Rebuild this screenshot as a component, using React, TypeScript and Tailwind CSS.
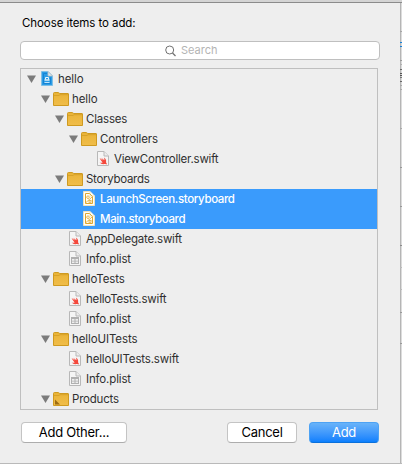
import React from "react";

type Kind = "project" | "folder" | "products" | "swift" | "storyboard" | "plist";

interface Item {
  name: string;
  depth: number;
  kind: Kind;
  selected?: boolean;
  spacing: number;
}

const items: Item[] = [
  { name: "hello", depth: 0, kind: "project", spacing: -0.1 },
  { name: "hello", depth: 1, kind: "folder", spacing: -0.1 },
  { name: "Classes", depth: 2, kind: "folder", spacing: -0.2 },
  { name: "Controllers", depth: 3, kind: "folder", spacing: -0.15 },
  { name: "ViewController.swift", depth: 4, kind: "swift", spacing: -0.21 },
  { name: "Storyboards", depth: 2, kind: "folder", spacing: -0.3 },
  { name: "LaunchScreen.storyboard", depth: 3, kind: "storyboard", selected: true, spacing: -0.36 },
  { name: "Main.storyboard", depth: 3, kind: "storyboard", selected: true, spacing: -0.36 },
  { name: "AppDelegate.swift", depth: 2, kind: "swift", spacing: -0.22 },
  { name: "Info.plist", depth: 2, kind: "plist", spacing: -0.15 },
  { name: "helloTests", depth: 1, kind: "folder", spacing: -0.15 },
  { name: "helloTests.swift", depth: 2, kind: "swift", spacing: -0.18 },
  { name: "Info.plist", depth: 2, kind: "plist", spacing: -0.15 },
  { name: "helloUITests", depth: 1, kind: "folder", spacing: -0.1 },
  { name: "helloUITests.swift", depth: 2, kind: "swift", spacing: -0.16 },
  { name: "Info.plist", depth: 2, kind: "plist", spacing: -0.15 },
  { name: "Products", depth: 1, kind: "products", spacing: -0.2 },
];

function Folder({ products }: { products: boolean }) {
  return (
    <svg width="16" height="16" viewBox="0 0 16 16" className="block">
      <defs>
        <linearGradient id="folderFill" x1="0" y1="0" x2="0" y2="1">
          <stop offset="0" stopColor="#e9b336" />
          <stop offset="1" stopColor="#f0bd4a" />
        </linearGradient>
      </defs>
      <path d="M.5 2.5 Q.5 1.5 1.5 1.5 H5.2 L6.8 2.5 H15 Q15.5 2.5 15.5 3 V14.5 H.5Z" fill="url(#folderFill)" stroke="#cf9a20" />
      <path d="M1 4.5 H6 L7 3.7 H15" fill="none" stroke="#d29d25" strokeWidth=".8" />
      {products && <path d="M2 8.5 L7 13.5 H2Z" fill="#9c6c13" />}
    </svg>
  );
}

function Page({ kind, selected }: { kind: Kind; selected?: boolean }) {
  const edge = kind === "storyboard" ? "#efe3bd" : "#b8b8b8";
  return (
    <svg width="16" height="16" viewBox="0 0 16 16" className="block">
      <path d="M2.5 .5 H9 L13.5 5 V14.5 H2.5Z" fill={selected ? "#fffefa" : "#f5f5f5"} stroke={edge} />
      <path d="M9 .5 V5 H13.5" fill={selected ? "#fffefa" : "#ececec"} stroke={edge} />
      {kind === "swift" && (
        <path
          d="M4.6 7 L8 9.4 L6.2 6.8 L9.4 9.3 Q9.6 7.8 8.9 6.4 Q11.8 8.6 11 11.2 Q12.2 12.6 11.7 13.6 Q10.6 12.6 9.4 13.1 Q6.6 13.8 4.4 11.2 Q6.2 12.2 7.6 11.5 Q5.8 9.6 4.6 7Z"
          fill="#f4483c"
        />
      )}
      {kind === "plist" && (
        <g>
          <rect x="4" y="6" width="8" height="7" fill="#b0b0b0" />
          <path d="M5 8 H7.5 V9.7 H5Z M8.5 8 H11 V9.7 H8.5Z M5 10.5 H7.5 V12 H5Z M8.5 10.5 H11 V12 H8.5Z" fill="#ededed" />
        </g>
      )}
      {kind === "storyboard" && (
        <g fill="none" stroke="#e0a92f">
          <path d="M4.5 2.5 H8.5 L11.5 5.5 V12.5 H4.5Z" />
          <circle cx="7" cy="6.2" r="1.3" strokeWidth=".8" />
          <path d="M5 11.5 L11 6" strokeWidth=".8" />
          <rect x="8" y="9.3" width="2" height="2" strokeWidth=".8" />
        </g>
      )}
    </svg>
  );
}

function Project() {
  return (
    <svg width="16" height="16" viewBox="0 0 16 16" className="block">
      <path d="M2.5 .5 H9 L13.5 5 V14.5 H2.5Z" fill="#2b9ce6" stroke="#7fbfe6" />
      <path d="M9 .5 V5 H13.5Z" fill="#e4e9ec" stroke="#b4bdc2" strokeWidth=".8" />
      <path d="M4.5 2.5 H8 M4.5 2.5 V12.5 H11.5 V6.5" fill="none" stroke="#1583d4" />
      <path d="M6.5 8.5 V6.5 H9.5 V8.5" fill="none" stroke="#e9f6ff" />
      <path d="M5.5 9 H10.5" stroke="#fff" strokeWidth="1.2" />
      <path d="M5.5 11.5 H10.5" stroke="#bfe4fb" />
    </svg>
  );
}

function Row({ item }: { item: Item }) {
  const open = item.kind === "project" || item.kind === "folder" || item.kind === "products";
  return (
    <div
      className={`flex h-5 items-center ${item.selected ? "bg-[#3a9bfc] font-medium text-white" : "text-[#303030]"}`}
      style={{ paddingLeft: 6 + item.depth * 14 }}
    >
      <div className="mr-[3px] w-[9px]">
        {open && (
          <svg width="9" height="8" viewBox="0 0 9 8" className="block">
            <path d="M0 .5 H9 L4.5 8Z" fill="#7b7b7b" />
          </svg>
        )}
      </div>
      <div className="mr-[3px] h-4 w-4">
        {item.kind === "project" ? (
          <Project />
        ) : item.kind === "folder" || item.kind === "products" ? (
          <Folder products={item.kind === "products"} />
        ) : (
          <Page kind={item.kind} selected={item.selected} />
        )}
      </div>
      <span className="text-[11.5px] leading-5 whitespace-nowrap" style={{ letterSpacing: item.spacing }}>
        {item.name}
      </span>
    </div>
  );
}

// Slivers of the window behind the sheet: distance from the strip's top, and colour.
const slivers = [
  { y: 28, color: "bg-[#a6a6a6]" },
  { y: 39, color: "bg-[#1681d8]" },
  { y: 43, color: "bg-[#1681d8]" },
  { y: 57, color: "bg-[#9a9a9a]" },
  { y: 61, color: "bg-[#b0b0b0]" },
  { y: 66, color: "bg-[#6a6a6a]" },
  { y: 70, color: "bg-[#555555]" },
  { y: 72, color: "bg-[#555555]" },
  { y: 74, color: "bg-[#777777]" },
  { y: 78, color: "bg-[#666666]" },
  { y: 82, color: "bg-[#aaaaaa]" },
  { y: 86, color: "bg-[#aaaaaa]" },
  { y: 125, color: "bg-[#aaaaaa]" },
  { y: 164, color: "bg-[#999999]" },
  { y: 203, color: "bg-[#999999]" },
  { y: 242, color: "bg-[#8c8c8c]" },
  { y: 264, color: "bg-[#bbbbbb]" },
  { y: 286, color: "bg-[#bbbbbb]" },
  { y: 309, color: "bg-[#999999]" },
  { y: 340, color: "bg-[#999999]" },
];

export default function App() {
  return (
    <div className="flex h-[464px] w-[402px] flex-col overflow-hidden bg-[#b9b9b9] font-['Inter','Liberation_Sans',sans-serif]">
      <div className="h-[3px] shrink-0 border-b border-[#8b8b8b] bg-[#d4d4d4]" />
      <div className="flex h-[460px] shrink-0">
        <main className="flex h-[460px] w-[400px] shrink-0 flex-col bg-[#eeeeee] pl-5">
          <h1 className="mt-[11px] ml-[2px] h-[18px] text-[11.5px] leading-[18px] font-normal tracking-[-0.08px] whitespace-nowrap text-black">
            Choose items to add:
          </h1>
          <div className="mt-[9px] flex h-[19px] w-[360px] items-center rounded-[4px] border border-[#bfbfbf] bg-white pl-[144px]">
            <svg width="12" height="12" viewBox="0 0 12 12" className="mr-[4px]" fill="none" stroke="#727272">
              <circle cx="4.7" cy="5" r="4" />
              <path d="M7.5 8 L10.5 11" strokeWidth="1.2" />
            </svg>
            <span className="text-[11px] leading-[17px] text-[#b4b4b4]">Search</span>
          </div>
          <section className="mt-2 h-[342px] w-[358px] border border-[#bfbfbf]">
            {items.map((item, i) => (
              <Row key={i} item={item} />
            ))}
          </section>
          <footer className="mt-3 flex h-5 pl-px text-[13px] leading-[19px] tracking-[-0.25px] text-black">
            <button className="h-[21px] w-[106px] rounded-[4px] border border-[#c4c4c4] border-b-[#adadad] bg-white">Add Other...</button>
            <button className="ml-[100px] h-[21px] w-[70px] rounded-[4px] border border-[#c4c4c4] border-b-[#adadad] bg-white">Cancel</button>
            <button className="ml-3 h-[21px] w-[70px] rounded-[4px] border border-[#4da2f4] border-b-[#0a70db] bg-linear-to-b from-[#69b3f9] to-[#087ffd] text-white">
              Add
            </button>
          </footer>
        </main>
        <div className="flex w-[2px] flex-col border-l border-[#b5b5b5] bg-[#dcdcdc]">
          {slivers.map((s, i) => (
            <div
              key={i}
              className={`-ml-px h-px w-[2px] shrink-0 ${s.color}`}
              style={{ marginTop: i === 0 ? s.y : s.y - slivers[i - 1].y - 1 }}
            />
          ))}
        </div>
      </div>
    </div>
  );
}
